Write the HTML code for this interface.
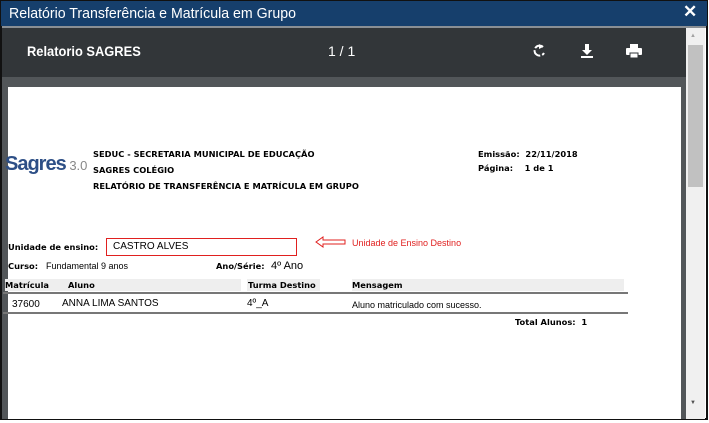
<!DOCTYPE html><html><head><style>
*{margin:0;padding:0;box-sizing:border-box}
body{width:709px;height:423px;background:#fff;position:relative;overflow:hidden;font-family:"Liberation Sans",sans-serif}
.a{position:absolute}
.t{font-family:"DejaVu Sans","Liberation Sans",sans-serif;font-size:8.3px;color:#000;white-space:nowrap}
.b{font-weight:bold}
</style></head><body>
<div class="a" style="left:0;top:0;width:708px;height:420px;border:2px solid #111;border-top:1px solid #111"></div>
<div class="a" style="left:1px;top:1px;width:706px;height:25px;background:#163f6c"></div>
<div class="a" style="left:9px;top:5px;color:#fff;font-size:15px;transform:scaleX(.943);transform-origin:left;white-space:nowrap">Relatório Transferência e Matrícula em Grupo</div>
<div class="a" style="left:683px;top:2px;color:#fff;font-size:17px;font-weight:bold">✕</div>
<div class="a" style="left:2px;top:26px;width:704px;height:2px;background:#8a8f94"></div>
<div class="a" style="left:2px;top:28px;width:684px;height:391px;background:#525659"></div>
<div class="a" style="left:2px;top:28px;width:684px;height:49px;background:#323639"></div>
<div class="a" style="left:27px;top:43px;color:#fff;font-size:14px;font-weight:bold;transform:scaleX(.92);transform-origin:left">Relatorio SAGRES</div>
<div class="a" style="left:328px;top:43px;color:#fff;font-size:14px">1 / 1</div>
<svg class="a" style="left:532px;top:43px" width="15" height="16" viewBox="0 0 15 16"><path d="M11 4A5 5 0 1 0 12 10" fill="none" stroke="#fff" stroke-width="2" stroke-dasharray="9 2"/><path d="M7 1l4 3-4 2z" fill="#fff"/></svg>
<svg class="a" style="left:580px;top:43px" width="14" height="16"><path d="M5 1h4v6h3l-5 5-5-5h3z" fill="#fff"/><rect x="1" y="13" width="12" height="2" fill="#fff"/></svg>
<svg class="a" style="left:626px;top:44px" width="16" height="15"><rect x="4" y="0" width="8" height="4" fill="#fff"/><rect x="0" y="4" width="16" height="7" rx="1" fill="#fff"/><rect x="4" y="9" width="8" height="5" fill="#fff" stroke="#323639" stroke-width="1"/></svg>
<div class="a" style="left:8px;top:87px;width:673px;height:332px;background:#fff"></div>
<div class="a" style="left:686px;top:28px;width:19px;height:391px;background:#f0f0f0"></div>
<div class="a" style="left:688px;top:45px;width:15px;height:142px;background:#c1c1c1"></div>
<div class="a" style="left:690px;top:33px;font-size:6px;color:#a3a3a3">▲</div>
<div class="a" style="left:690px;top:400px;font-size:6px;color:#505050">▼</div>
<div class="a" style="left:5px;top:153px;font-size:20px;font-weight:bold;color:#2d4f86;letter-spacing:-1px">Sagres<span style="font-size:13px;color:#888;font-weight:normal;letter-spacing:0"> 3.0</span></div>
<div class="a t b" style="left:93px;top:149px">SEDUC - SECRETARIA MUNICIPAL DE EDUCAÇÃO</div>
<div class="a t b" style="left:93px;top:165px">SAGRES COLÉGIO</div>
<div class="a t b" style="left:93px;top:181px">RELATÓRIO DE TRANSFERÊNCIA E MATRÍCULA EM GRUPO</div>
<div class="a t b" style="left:478px;top:149px">Emissão:&nbsp; 22/11/2018</div>
<div class="a t b" style="left:478px;top:163px">Página:&nbsp;&nbsp;&nbsp; 1 de 1</div>
<div class="a t b" style="left:8px;top:242px">Unidade de ensino:</div>
<div class="a" style="left:106px;top:238px;width:191px;height:18px;border:1px solid #e0201f"></div>
<div class="a" style="left:113px;top:241px;font-size:10px">CASTRO ALVES</div>
<svg class="a" style="left:315px;top:236px" width="32" height="12"><path d="M1 6l7-5v3h22v4H8v3z" fill="#fff" stroke="#e0201f"/></svg>
<div class="a" style="left:352px;top:238px;font-size:9px;color:#e0201f">Unidade de Ensino Destino</div>
<div class="a t b" style="left:8px;top:261px">Curso:</div>
<div class="a t" style="left:46px;top:261px;font-family:'Liberation Sans',sans-serif;font-size:9px">Fundamental 9 anos</div>
<div class="a t b" style="left:216px;top:261px">Ano/Série:</div>
<div class="a" style="left:271px;top:260px;font-size:11px">4º Ano</div>
<div class="a" style="left:5px;top:279px;width:60px;height:12px;background:#eee"></div>
<div class="a" style="left:65px;top:279px;width:176px;height:12px;background:#eee"></div>
<div class="a" style="left:247px;top:279px;width:73px;height:12px;background:#eee"></div>
<div class="a" style="left:352px;top:279px;width:272px;height:12px;background:#eee"></div>
<div class="a t b" style="left:5px;top:280px">Matrícula</div>
<div class="a t b" style="left:68px;top:280px">Aluno</div>
<div class="a t b" style="left:248px;top:280px">Turma Destino</div>
<div class="a t b" style="left:352px;top:280px">Mensagem</div>
<div class="a" style="left:3px;top:292px;width:625px;height:2px;background:#777"></div>
<div class="a" style="left:12px;top:299px;font-size:10px">37600</div>
<div class="a" style="left:62px;top:298px;font-size:10px">ANNA LIMA SANTOS</div>
<div class="a" style="left:247px;top:298px;font-size:10px">4º_A</div>
<div class="a t" style="left:352px;top:300px;font-family:'Liberation Sans',sans-serif;font-size:9px">Aluno matriculado com sucesso.</div>
<div class="a" style="left:3px;top:312px;width:625px;height:2px;background:#777"></div>
<div class="a t b" style="left:515px;top:317px">Total Alunos:&nbsp; 1</div>
</body></html>
